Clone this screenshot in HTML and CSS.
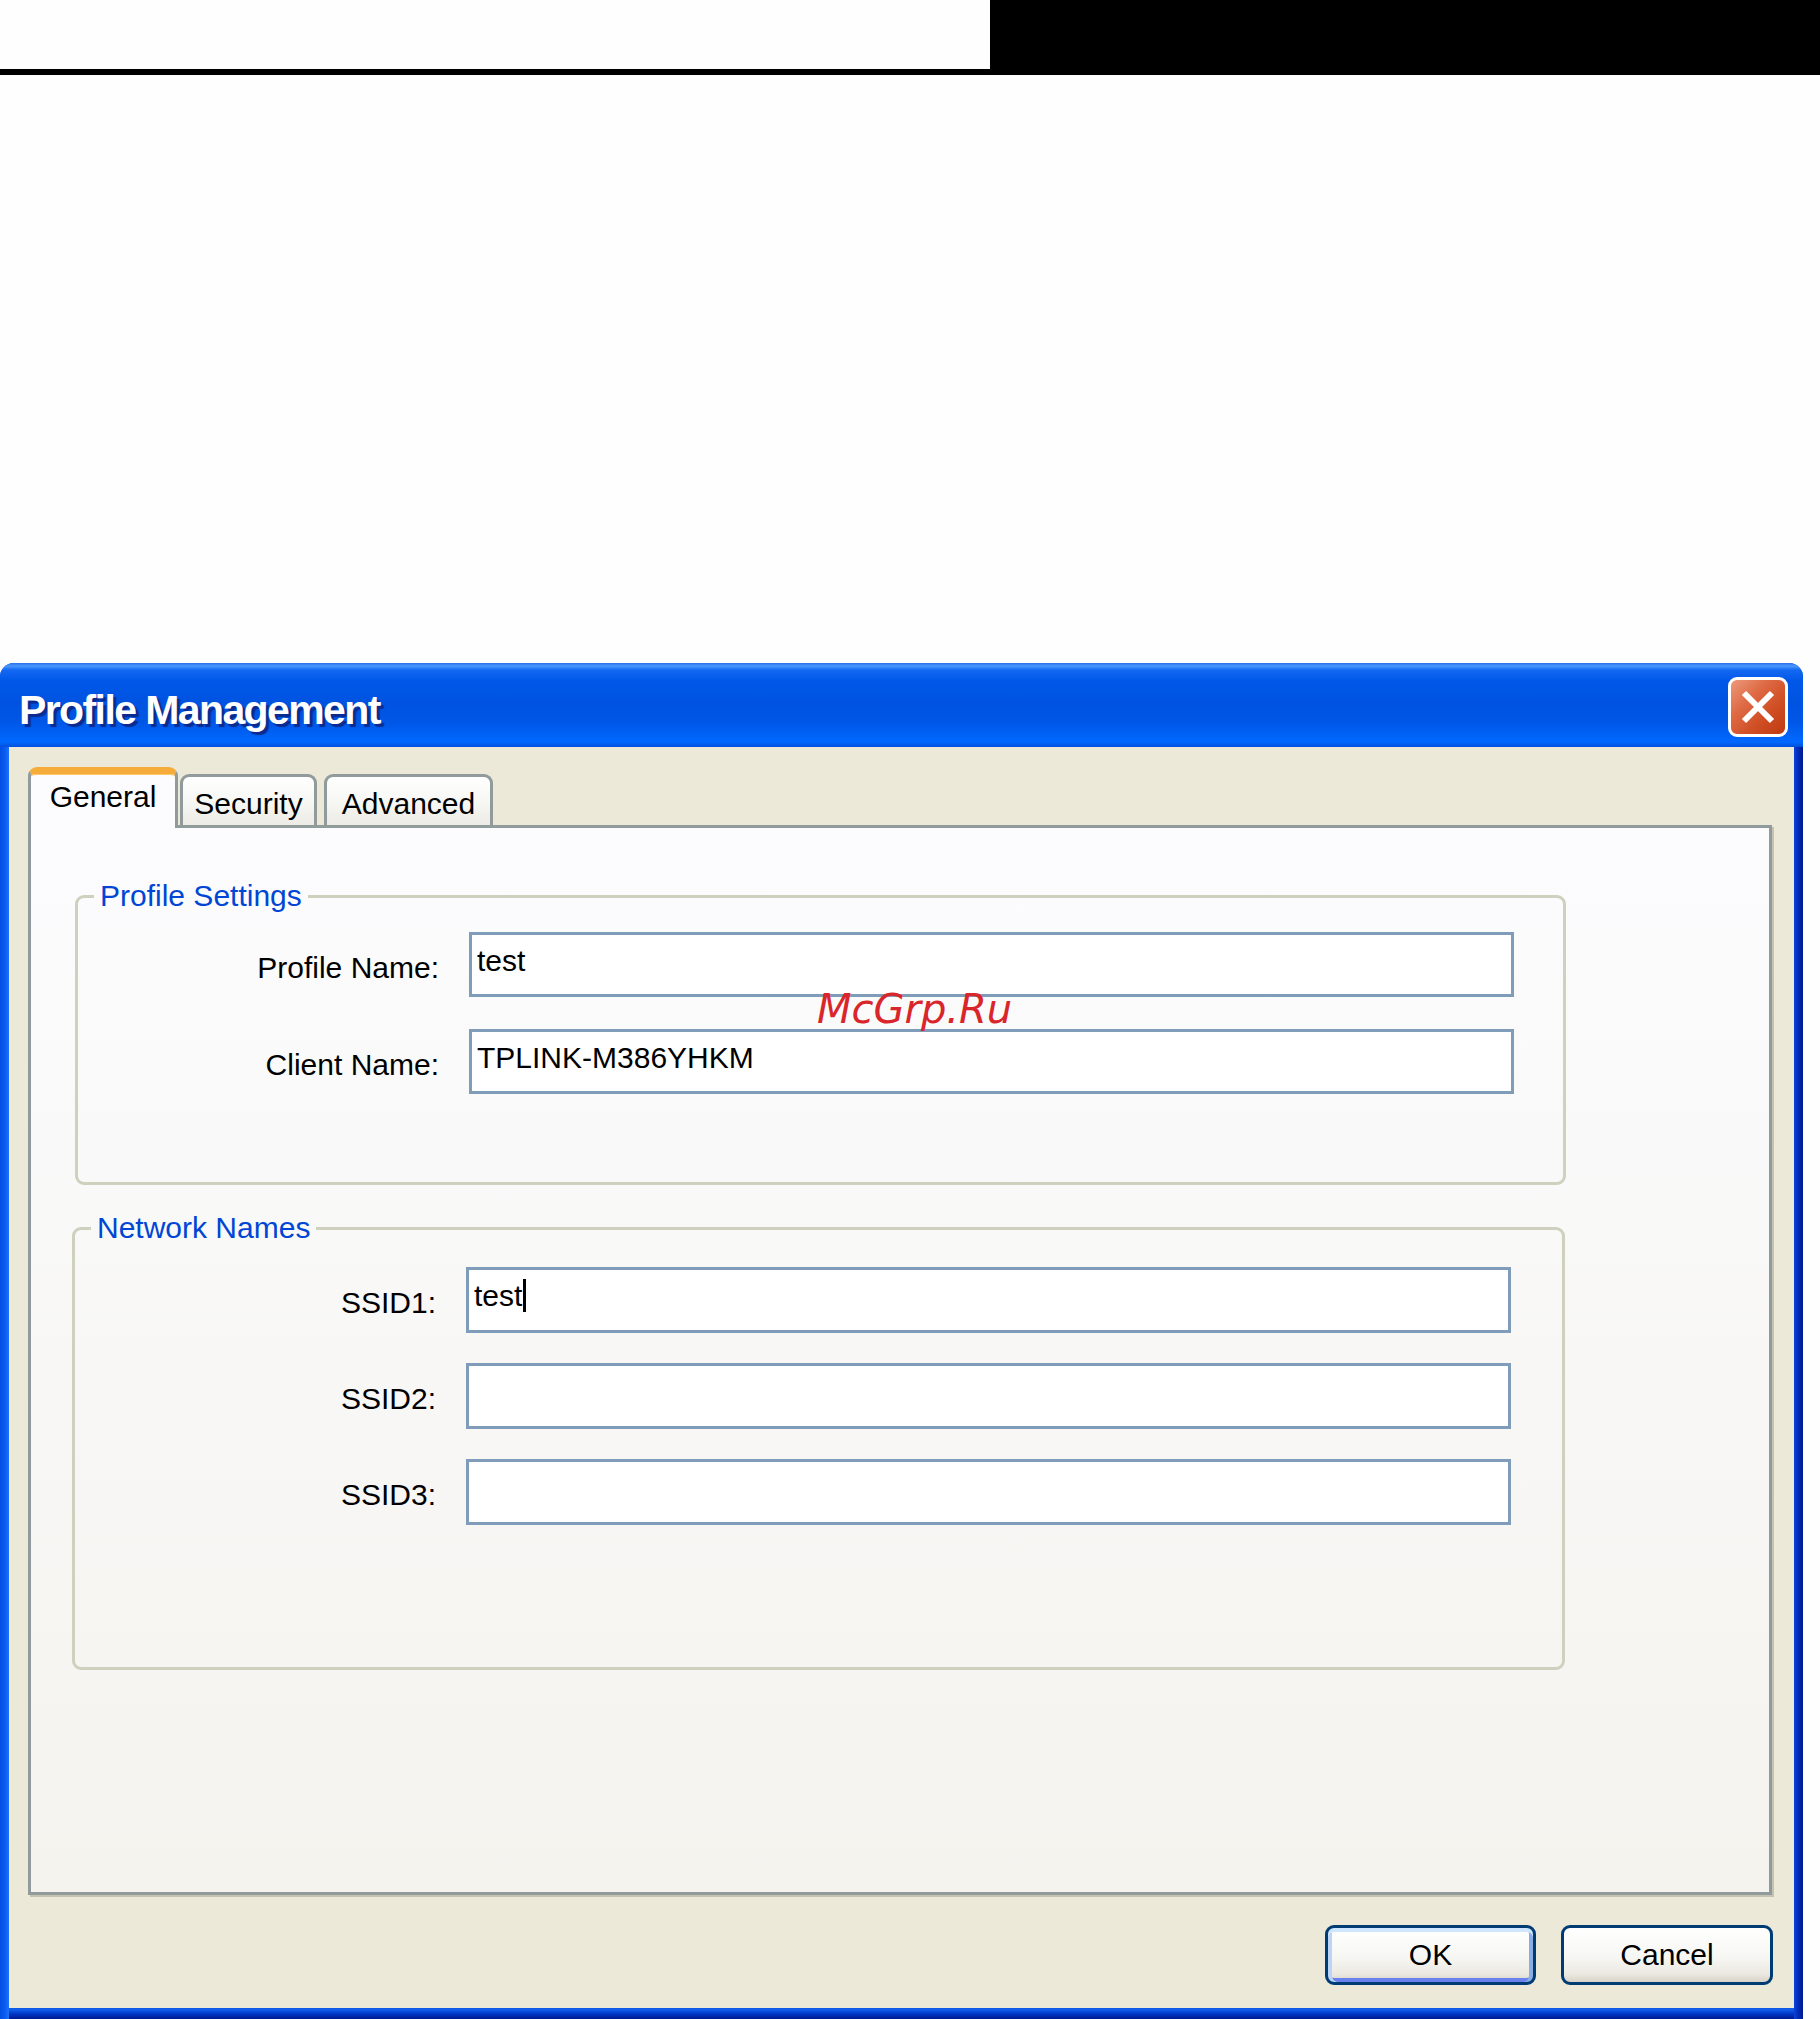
FILE: index.html
```html
<!DOCTYPE html>
<html lang="en">
<head>
<meta charset="utf-8">
<title>Profile Management</title>
<link rel="stylesheet" href="styles.css">
</head>
<body>
<div class="page-top">
  <div class="top-white"></div>
  <div class="top-black"></div>
</div>

<div class="window">
  <div class="titlebar">
    <span class="title">Profile Management</span>
    <div class="close-btn">
      <svg width="34" height="34" viewBox="0 0 34 34"><path d="M3 3 L31 31 M31 3 L3 31" stroke="#fff" stroke-width="6" stroke-linecap="butt"/></svg>
    </div>
  </div>
  <div class="frame">
    <div class="client">
      <div class="tabs">
        <div class="tab tab-active">General</div>
        <div class="tab tab-security">Security</div>
        <div class="tab tab-advanced">Advanced</div>
      </div>
      <div class="panel">
        <fieldset class="group group-profile">
          <legend>Profile Settings</legend>
          <div class="form-grid form-profile">
            <div class="field-label">Profile Name:</div>
            <div class="textbox">test</div>
            <div class="field-label">Client Name:</div>
            <div class="textbox">TPLINK-M386YHKM</div>
          </div>
        </fieldset>
        <fieldset class="group group-network">
          <legend>Network Names</legend>
          <div class="form-grid form-network">
            <div class="field-label">SSID1:</div>
            <div class="textbox"><span class="caret-text">test</span></div>
            <div class="field-label">SSID2:</div>
            <div class="textbox"></div>
            <div class="field-label">SSID3:</div>
            <div class="textbox"></div>
          </div>
        </fieldset>
      </div>
      <div class="buttons">
        <div class="btn btn-default">OK</div>
        <div class="btn btn-cancel">Cancel</div>
      </div>
    </div>
  </div>
  <div class="watermark">McGrp.Ru</div>
</div>
</body>
</html>
```

FILE: styles.css
```css
html, body {
  margin: 0;
  padding: 0;
  background: #fefefe;
}
body {
  width: 1820px;
  height: 2019px;
  overflow: hidden;
  font-family: "Liberation Sans", Arial, sans-serif;
}

.page-top {
  display: flex;
  height: 75px;
}
.top-white {
  width: 990px;
  height: 69px;
  background: #fefefe;
  border-bottom: 6px solid #000;
}
.top-black {
  flex: 1;
  background: #000;
}

.window {
  position: relative;
  width: 1803px;
  height: 1356px;
  margin-top: 588px;
  display: flex;
  flex-direction: column;
  border-radius: 14px 14px 0 0;
  overflow: hidden;
  background: #0a4fe0;
}

.titlebar {
  height: 84px;
  flex: 0 0 84px;
  display: flex;
  justify-content: space-between;
  align-items: flex-start;
  background: linear-gradient(to bottom,
    #2a6fe8 0px, #4a98ff 3px, #1468f2 7px, #0058e8 18px,
    #0053e1 40px, #0056e6 58px, #0062f6 72px, #0068ff 79px, #0050dc 84px);
}
.title {
  margin: 27px 0 0 19px;
  font-family: "Liberation Sans", Arial, sans-serif;
  font-weight: bold;
  font-size: 41px;
  line-height: 41px;
  letter-spacing: -1.6px;
  color: #fff;
  text-shadow: 3px 3px 1px #0b2b8f;
}
.close-btn {
  width: 60px;
  height: 60px;
  box-sizing: border-box;
  margin: 14px 15px 0 0;
  border: 3px solid #fff;
  border-radius: 9px;
  background: linear-gradient(135deg, #ec9a7c 0%, #de6a45 35%, #d04f25 65%, #c03a10 100%);
  display: flex;
  align-items: center;
  justify-content: center;
}

.frame {
  flex: 1;
  display: flex;
  padding: 0 9px 11px 9px;
  background:
    linear-gradient(to right, #0350e3 0px, #0a5cf0 5px, #1e72f8 9px, transparent 9px,
      transparent calc(100% - 9px), #0c42d8 calc(100% - 9px), #0028b0 calc(100% - 4px), #001890 100%),
    linear-gradient(to bottom, #0a4fe0 0%, #0a4fe0 calc(100% - 11px), #1464f0 calc(100% - 10px), #0036c4 calc(100% - 5px), #00198f 100%);
}

.client {
  flex: 1;
  display: flex;
  flex-direction: column;
  background: #ece9d8;
  padding: 20px 22px 23px 19px;
}

.tabs {
  display: flex;
  align-items: flex-end;
  height: 58px;
  position: relative;
  z-index: 1;
}
.tab {
  box-sizing: border-box;
  height: 51px;
  border: 3px solid #919b9c;
  border-bottom: none;
  border-radius: 9px 9px 0 0;
  background: linear-gradient(to bottom, #ffffff 0%, #f7f7f4 50%, #ecebe5 100%);
  font-size: 30px;
  line-height: 30px;
  color: #000;
  text-align: center;
  padding-top: 12px;
}
.tab-active {
  width: 150px;
  height: 61px;
  margin-bottom: -3px;
  border-top: 7px solid #f6ac3a;
  background: #fcfcfe;
  padding-top: 8px;
  box-shadow: inset 0 1px 0 #ffc86a;
}
.tab-security {
  width: 137px;
  margin-left: 2px;
}
.tab-advanced {
  width: 169px;
  margin-left: 7px;
}

.panel {
  box-sizing: border-box;
  height: 1070px;
  border: 3px solid #919b9c;
  box-shadow: 2px 2px 0 #c5c2b2;
  background: linear-gradient(to bottom, #fcfcfe 0%, #f4f3ee 100%);
  padding-top: 53px;
}

.group {
  box-sizing: border-box;
  margin: 0;
  min-width: 0;
  border: 3px solid #d0d0bf;
  border-radius: 9px;
}
.group legend {
  margin-left: 16px;
  padding: 0 6px;
  font-size: 30px;
  line-height: 30px;
  color: #0046d5;
}
.group-profile {
  width: 1491px;
  margin-left: 44px;
  padding: 21px 49px 88px 0;
}
.group-network {
  width: 1493px;
  margin-left: 41px;
  margin-top: 28px;
  padding: 24px 51px 142px 0;
}

.form-grid {
  display: grid;
  grid-template-columns: 361px 1045px;
  column-gap: 30px;
}
.form-profile {
  row-gap: 32px;
}
.form-network {
  row-gap: 30px;
}

.field-label {
  text-align: right;
  font-size: 30px;
  line-height: 30px;
  padding-top: 21px;
  color: #000;
}

.textbox {
  box-sizing: border-box;
  height: 65px;
  border: 3px solid #7f9db9;
  background: #fff;
  padding: 11px 5px 0;
  font-size: 30px;
  line-height: 30px;
  color: #000;
  white-space: nowrap;
}
.form-network .textbox {
  height: 66px;
}
.caret-text {
  border-right: 3px solid #000;
  padding-right: 1px;
}

.buttons {
  display: flex;
  justify-content: flex-end;
  gap: 25px;
  margin-top: 30px;
  margin-right: -1px;
}
.btn {
  box-sizing: border-box;
  height: 60px;
  border: 3px solid #003c74;
  border-radius: 9px;
  background: linear-gradient(to bottom, #ffffff 0%, #f6f6f3 55%, #ebe9e1 85%, #d8d3c8 100%);
  font-size: 30px;
  line-height: 30px;
  color: #000;
  display: flex;
  align-items: center;
  justify-content: center;
}
.btn-default {
  width: 211px;
  box-shadow: inset 0 4px 0 #cee7ff, inset 4px 0 0 #bcd4f6, inset -4px 0 0 #89ade4, inset 0 -4px 0 #6982ee;
}
.btn-cancel {
  width: 212px;
}

.watermark {
  position: absolute;
  left: 817px;
  top: 326px;
  font-family: "DejaVu Sans", sans-serif;
  font-style: italic;
  font-size: 40px;
  line-height: 40px;
  color: #d9262b;
}
```
